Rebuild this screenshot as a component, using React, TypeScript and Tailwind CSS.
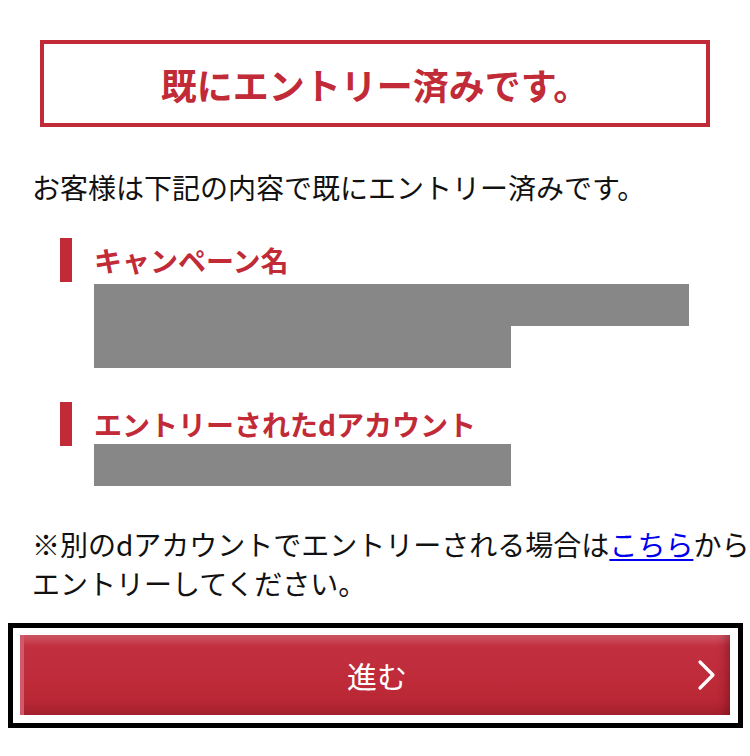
export default function App() {
  const red = 'text-[#c12a37]';

  return (
    <div
      className="w-[750px] h-[756px] bg-white overflow-hidden pt-10"
      style={{ fontFamily: '"Noto Sans CJK JP", "Noto Sans", sans-serif' }}
    >
      {/* heading box */}
      <div className="mx-10 h-[87px] border-4 border-[#c12a37] flex items-center justify-center">
        <h1 className={`${red} text-[36px] font-bold leading-none`}>既にエントリー済みです。</h1>
      </div>

      <p className="mt-10 pl-8 text-[28px] leading-[40px] text-[#111]">
        お客様は下記の内容で既にエントリー済みです。
      </p>

      {/* campaign */}
      <div className="mt-[31px] pl-[60px]">
        <div className="flex items-center gap-[22px] h-11">
          <span className="w-3 h-11 bg-[#c12a37]" />
          <span className={`${red} text-[28px] font-bold leading-none`}>キャンペーン名</span>
        </div>
        <div className="mt-[2px] ml-[34px]">
          <div className="w-[595px] h-[42px] bg-[#878787]" />
          <div className="w-[417px] h-[42px] bg-[#878787]" />
        </div>
      </div>

      {/* account */}
      <div className="mt-[34px] pl-[60px]">
        <div className="flex items-center gap-[22px] h-11">
          <span className="w-3 h-11 bg-[#c12a37]" />
          <span className={`${red} text-[28px] font-bold leading-none`}>エントリーされたdアカウント</span>
        </div>
        <div className="-mt-[2px] ml-[34px]">
          <div className="w-[417px] h-[42px] bg-[#878787]" />
        </div>
      </div>

      <p className="mt-[39px] pl-8 text-[28px] leading-[39px] text-[#111] whitespace-nowrap">
        ※別のdアカウントでエントリーされる場合は
        <a href="#" className="text-[#0000ee] underline underline-offset-[3px]">こちら</a>
        から
        <br />
        エントリーしてください。
      </p>

      {/* button with focus frame */}
      <div className="mt-5 ml-2 w-[735px] h-[105px] border-[5px] border-black pl-[7px] pt-[7px] pr-[8px] pb-[8px]">
        <button
          className="relative w-full h-full flex items-center justify-center border-l-4 border-[#cf5a69] text-white text-[30px] leading-none shadow-[inset_-10px_0_10px_-6px_rgba(90,10,20,0.45)] bg-[linear-gradient(to_bottom,#d05866_0%,#c23040_14%,#be2a38_60%,#b92735_82%,#a41f2d_100%)]"
        >
          進む
          <svg
            className="absolute right-[12px] top-1/2 -translate-y-1/2"
            width="22"
            height="34"
            viewBox="0 0 22 34"
            fill="none"
          >
            <path d="M4 4 L17 17 L4 30" stroke="white" strokeWidth="3.2" strokeLinecap="round" strokeLinejoin="round" />
          </svg>
        </button>
      </div>
    </div>
  );
}
